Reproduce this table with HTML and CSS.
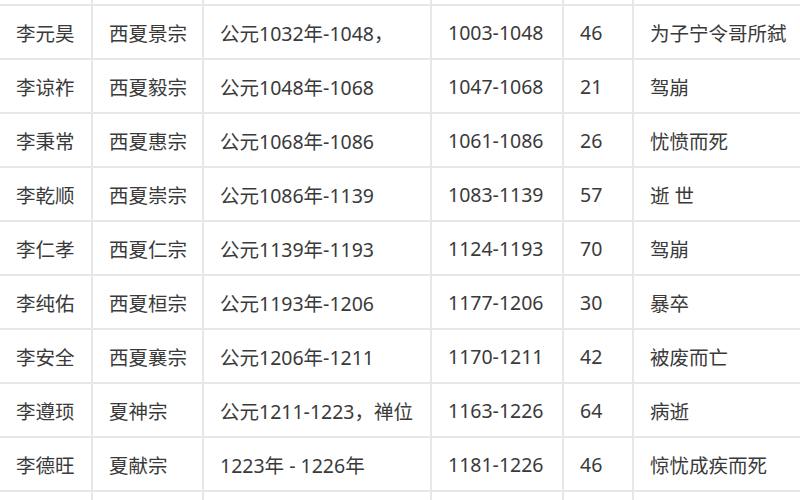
FILE: index.html
```html
<!DOCTYPE html>
<html lang="zh-CN">
<head>
<meta charset="utf-8">
<title>西夏皇帝列表</title>
<link rel="stylesheet" href="styles.css">
</head>
<body>
<div class="sheet">
  <div class="row">
    <div class="cell"></div><div class="cell"></div><div class="cell"></div><div class="cell"></div><div class="cell"></div><div class="cell"></div>
  </div>
  <div class="row">
    <div class="cell">李元昊</div><div class="cell">西夏景宗</div><div class="cell">公元1032年-1048，</div><div class="cell">1003-1048</div><div class="cell">46</div><div class="cell">为子宁令哥所弑</div>
  </div>
  <div class="row">
    <div class="cell">李谅祚</div><div class="cell">西夏毅宗</div><div class="cell">公元1048年-1068</div><div class="cell">1047-1068</div><div class="cell">21</div><div class="cell">驾崩</div>
  </div>
  <div class="row">
    <div class="cell">李秉常</div><div class="cell">西夏惠宗</div><div class="cell">公元1068年-1086</div><div class="cell">1061-1086</div><div class="cell">26</div><div class="cell">忧愤而死</div>
  </div>
  <div class="row">
    <div class="cell">李乾顺</div><div class="cell">西夏崇宗</div><div class="cell">公元1086年-1139</div><div class="cell">1083-1139</div><div class="cell">57</div><div class="cell">逝 世</div>
  </div>
  <div class="row">
    <div class="cell">李仁孝</div><div class="cell">西夏仁宗</div><div class="cell">公元1139年-1193</div><div class="cell">1124-1193</div><div class="cell">70</div><div class="cell">驾崩</div>
  </div>
  <div class="row">
    <div class="cell">李纯佑</div><div class="cell">西夏桓宗</div><div class="cell">公元1193年-1206</div><div class="cell">1177-1206</div><div class="cell">30</div><div class="cell">暴卒</div>
  </div>
  <div class="row">
    <div class="cell">李安全</div><div class="cell">西夏襄宗</div><div class="cell">公元1206年-1211</div><div class="cell">1170-1211</div><div class="cell">42</div><div class="cell">被废而亡</div>
  </div>
  <div class="row">
    <div class="cell">李遵顼</div><div class="cell">夏神宗</div><div class="cell">公元1211-1223，禅位</div><div class="cell">1163-1226</div><div class="cell">64</div><div class="cell">病逝</div>
  </div>
  <div class="row">
    <div class="cell">李德旺</div><div class="cell">夏献宗</div><div class="cell">1223年 - 1226年</div><div class="cell">1181-1226</div><div class="cell">46</div><div class="cell">惊忧成疾而死</div>
  </div>
  <div class="row">
    <div class="cell"></div><div class="cell"></div><div class="cell"></div><div class="cell"></div><div class="cell"></div><div class="cell"></div>
  </div>
</div>
</body>
</html>
```

FILE: styles.css
```css
html, body {
  margin: 0;
  padding: 0;
  background: #ffffff;
  overflow: hidden;
}

body {
  width: 800px;
  height: 500px;
  font-family: "Noto Sans", "Noto Sans CJK SC", sans-serif;
  font-size: 19.5px;
  color: #3a3a3a;
}

.sheet {
  margin-top: -48px;
  width: 800px;
}

.row {
  display: grid;
  grid-template-columns: 93px 111px 228px 132px 70px 166px;
  height: 54px;
}

.cell {
  box-sizing: border-box;
  height: 54px;
  display: flex;
  align-items: center;
  padding-left: 16px;
  border-right: 2px solid #e7e7e7;
  border-bottom: 2px solid #e7e7e7;
  white-space: nowrap;
}

.cell:last-child {
  border-right: none;
}
```
